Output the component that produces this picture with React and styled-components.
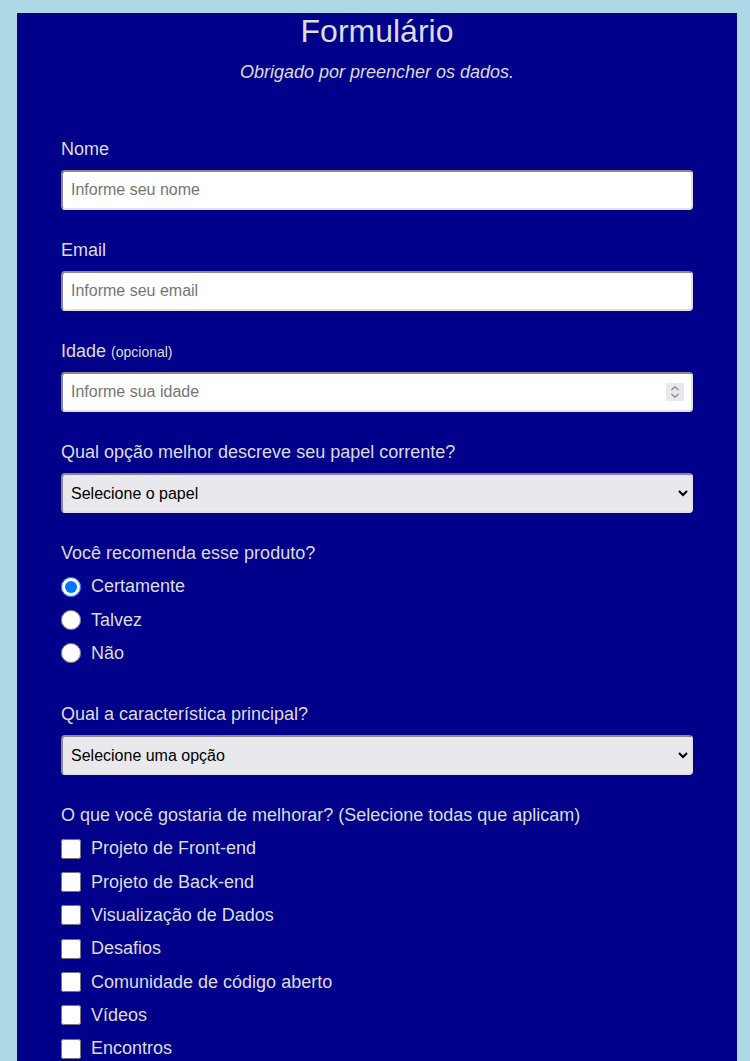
import React from 'react';
import styled, { createGlobalStyle } from 'styled-components';

const GlobalStyle = createGlobalStyle`
  html, body {
    margin: 0;
    padding: 0;
    background-color: #add8e6;
    font-family: "Liberation Sans", Arial, sans-serif;
  }
`;

const Panel = styled.main`
  margin: 13px 13px 0 17px;
  width: 720px;
  background-color: #00008b;
  color: #dcdcdc;
  padding: 0 44px 60px 44px;
  box-sizing: border-box;
`;

const Title = styled.h1`
  margin: 0;
  font-size: 32px;
  font-weight: 400;
  text-align: center;
`;

const Description = styled.p`
  margin: 12px 0 0 0;
  font-size: 18px;
  font-style: italic;
  text-align: center;
`;

const Form = styled.form`
  margin-top: 55px;
`;

const Group = styled.div`
  margin-bottom: ${(p) => (p.$wide ? '33px' : '29px')};
`;

const Label = styled.label`
  display: block;
  margin: 0 0 ${(p) => (p.$tight ? '6px' : '10px')} 0;
  font-size: 18px;
  line-height: 22px;
`;

const Hint = styled.span`
  font-size: 14px;
  line-height: 1;
`;

const Field = styled.input`
  display: block;
  width: 100%;
  height: 40px;
  box-sizing: border-box;
  padding: 0 8px;
  font-family: "Liberation Sans", Arial, sans-serif;
  font-size: 16px;
  background: #fff;
  border-style: solid;
  border-width: 2px;
  border-color: #8a8a8a #e2e2e2 #e2e2e2 #8a8a8a;
  border-radius: 4px;
  outline: none;

  &::placeholder {
    color: #757575;
  }

  &::-webkit-inner-spin-button,
  &::-webkit-outer-spin-button {
    -webkit-appearance: none;
    margin: 0;
  }
`;

const NumberWrap = styled.div`
  position: relative;
`;

const Spinner = styled.span`
  position: absolute;
  top: 50%;
  right: 9px;
  width: 18px;
  height: 18px;
  transform: translateY(-50%);
  display: flex;
  align-items: center;
  justify-content: center;
  background: #e9e9ed;
  pointer-events: none;
`;

const Dropdown = styled.select`
  display: block;
  width: 100%;
  height: 40px;
  box-sizing: border-box;
  padding: 0 4px;
  font-family: "Liberation Sans", Arial, sans-serif;
  font-size: 16px;
  color: #000;
  background-color: #e9e9ed;
  border-style: solid;
  border-width: 2px;
  border-color: #8a8a8a #e2e2e2 #e2e2e2 #8a8a8a;
  border-radius: 4px;
`;

const Option = styled.label`
  display: flex;
  align-items: center;
  height: 33.35px;
  font-size: 18px;
`;

const Mark = styled.input`
  width: 20px;
  height: 20px;
  margin: 0 10px 0 0;
  flex-shrink: 0;
`;

const Notes = styled.textarea`
  display: block;
  width: 100%;
  height: 120px;
  box-sizing: border-box;
  padding: 8px;
  font-family: "Liberation Sans", Arial, sans-serif;
  font-size: 16px;
  border-radius: 4px;
`;

const Submit = styled.button`
  display: block;
  width: 100%;
  height: 44px;
  font-size: 18px;
  color: #fff;
  background: #37af65;
  border: none;
  border-radius: 4px;
`;

const recommend = ['Certamente', 'Talvez', 'Não'];
const improvements = [
  'Projeto de Front-end',
  'Projeto de Back-end',
  'Visualização de Dados',
  'Desafios',
  'Comunidade de código aberto',
  'Vídeos',
  'Encontros',
  'Mentoria',
];

const App = () => (
  <>
    <GlobalStyle />
    <Panel>
      <Title>Formulário</Title>
      <Description>Obrigado por preencher os dados.</Description>
      <Form onSubmit={(e) => e.preventDefault()}>
        <Group>
          <Label htmlFor="name">Nome</Label>
          <Field id="name" type="text" placeholder="Informe seu nome" />
        </Group>
        <Group>
          <Label htmlFor="email">Email</Label>
          <Field id="email" type="email" placeholder="Informe seu email" />
        </Group>
        <Group>
          <Label htmlFor="age">
            Idade <Hint>(opcional)</Hint>
          </Label>
          <NumberWrap>
            <Field id="age" type="number" placeholder="Informe sua idade" />
            <Spinner>
              <svg width="10" height="14" viewBox="0 0 10 14" fill="none" stroke="#8a8a8a" strokeWidth="1.3">
                <path d="M1.5 5 L5 1.8 L8.5 5" />
                <path d="M1.5 9 L5 12.2 L8.5 9" />
              </svg>
            </Spinner>
          </NumberWrap>
        </Group>
        <Group>
          <Label htmlFor="role">Qual opção melhor descreve seu papel corrente?</Label>
          <Dropdown id="role" defaultValue="">
            <option value="" disabled>Selecione o papel</option>
            <option>Estudante</option>
            <option>Profissional</option>
          </Dropdown>
        </Group>
        <Group $wide>
          <Label $tight as="p">Você recomenda esse produto?</Label>
          {recommend.map((r, i) => (
            <Option key={r}>
              <Mark type="radio" name="recommend" defaultChecked={i === 0} />
              {r}
            </Option>
          ))}
        </Group>
        <Group>
          <Label htmlFor="feature">Qual a característica principal?</Label>
          <Dropdown id="feature" defaultValue="">
            <option value="" disabled>Selecione uma opção</option>
            <option>Desafios</option>
            <option>Projetos</option>
          </Dropdown>
        </Group>
        <Group $wide>
          <Label $tight as="p">
            O que você gostaria de melhorar? (Selecione todas que aplicam)
          </Label>
          {improvements.map((item) => (
            <Option key={item}>
              <Mark type="checkbox" />
              {item}
            </Option>
          ))}
        </Group>
        <Group>
          <Label htmlFor="notes">Comentários ou sugestões?</Label>
          <Notes id="notes" placeholder="Escreva aqui..." />
        </Group>
        <Submit type="submit">Enviar</Submit>
      </Form>
    </Panel>
  </>
);

export default App;
